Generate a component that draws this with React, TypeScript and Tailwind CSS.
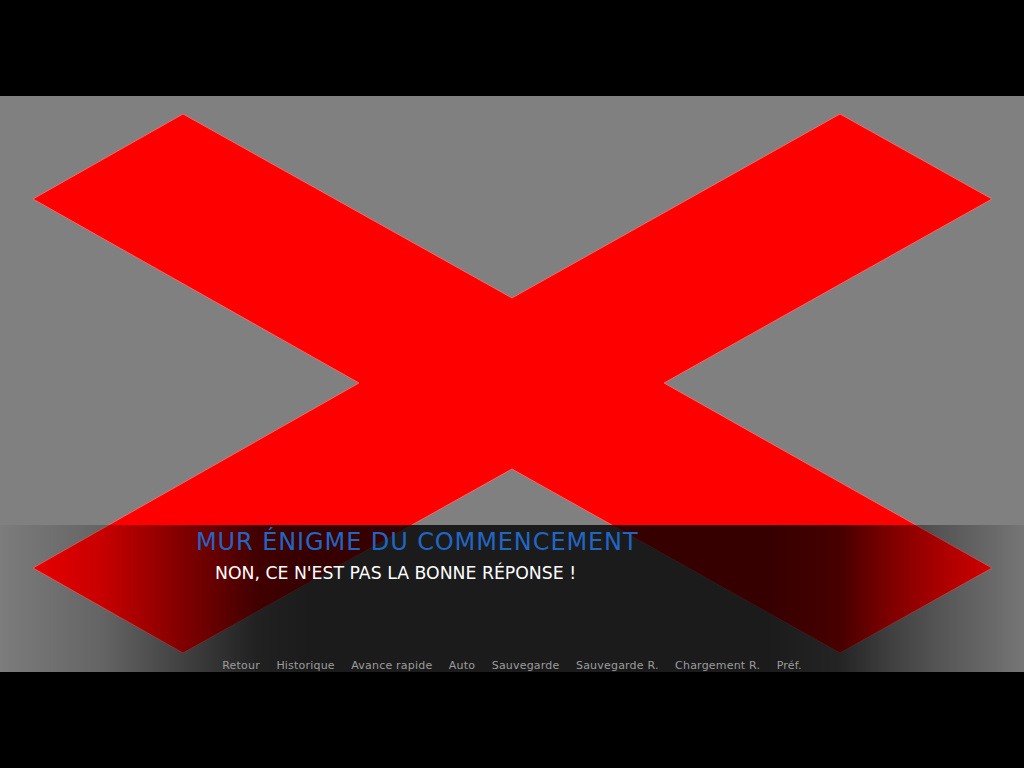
import React from "react";

const quickMenu = [
  "Retour",
  "Historique",
  "Avance rapide",
  "Auto",
  "Sauvegarde",
  "Sauvegarde R.",
  "Chargement R.",
  "Préf.",
];

function CrossMark() {
  return (
    <svg
      className="absolute inset-0"
      width="1024"
      height="576"
      viewBox="0 0 1024 576"
    >
      <polygon
        points="183,18 512,202 840,18 992,103 664,287 992,472 840,557 512,373 183,557 33,472 359,287 33,103"
        fill="#ff0000"
        stroke="#ff7070"
        strokeWidth="0.8"
      />
    </svg>
  );
}

export default function App() {
  return (
    <div
      className="w-[1024px] h-[768px] bg-black flex flex-col justify-center"
      style={{ fontFamily: '"DejaVu Sans", "Noto Sans", sans-serif' }}
    >
      <div className="relative w-[1024px] h-[576px] bg-[#808080] overflow-hidden">
        <CrossMark />

        <div className="absolute left-0 right-0 bottom-0 h-[147px] flex flex-col bg-[linear-gradient(to_right,rgba(0,0,0,0.03)_0%,rgba(0,0,0,0.22)_10%,rgba(0,0,0,0.5)_18%,rgba(0,0,0,0.74)_25%,rgba(0,0,0,0.79)_30%,rgba(0,0,0,0.79)_75%,rgba(0,0,0,0.72)_82%,rgba(0,0,0,0.5)_87%,rgba(0,0,0,0.33)_92%,rgba(0,0,0,0.18)_97%,rgba(0,0,0,0.08)_100%)]">
          <div className="pl-[196px] pt-[5px] text-[24px] leading-none text-[#2266c4] tracking-[0.9px] whitespace-nowrap">
            MUR ÉNIGME DU COMMENCEMENT
          </div>
          <div className="pl-[215px] mt-[11px] text-[17.3px] leading-none text-white whitespace-nowrap">
            NON, CE N'EST PAS LA BONNE RÉPONSE !
          </div>
          <div className="mt-auto mb-[1px] flex justify-center gap-[16.5px] text-[11px] leading-none text-[#9c9c9c] tracking-[0.2px]">
            {quickMenu.map((item) => (
              <span key={item} className="whitespace-nowrap">
                {item}
              </span>
            ))}
          </div>
        </div>
      </div>
    </div>
  );
}
